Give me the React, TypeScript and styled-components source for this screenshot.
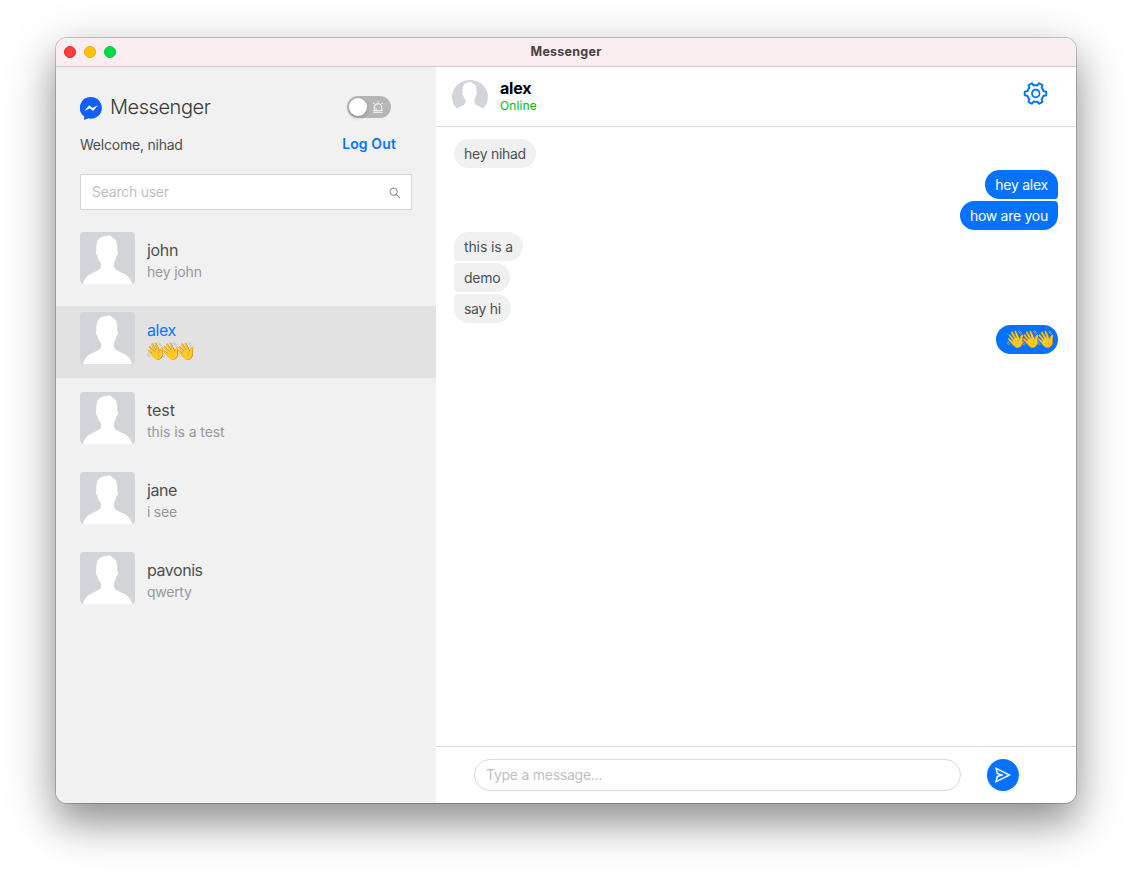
import React from "react";
import styled, { createGlobalStyle } from "styled-components";
import { AiOutlineAlert, AiOutlineSearch, AiOutlineSend, AiOutlineSetting } from "react-icons/ai";

const GlobalStyle = createGlobalStyle`
  *, *::before, *::after { box-sizing: border-box; }
  body {
    margin: 0;
    background: #fff;
    font-family: Inter, "Liberation Sans", sans-serif;
    font-size: 14px;
    color: #4a5052;
    overflow: hidden;
  }
`;

const Desktop = styled.div`
  height: 877px;
  padding: 38px 56px 74px;
`;

const Window = styled.div`
  height: 765px;
  display: flex;
  flex-direction: column;
  border-radius: 11px;
  overflow: hidden;
  background: #fff;
  box-shadow: 0 0 0 1px rgba(0, 0, 0, 0.2), 0 19px 34px rgba(0, 0, 0, 0.28), 0 16px 56px rgba(0, 0, 0, 0.24);
`;

const TitleBar = styled.div`
  height: 29px;
  flex: none;
  display: grid;
  grid-template-columns: 1fr auto 1fr;
  align-items: center;
  background: #f9edef;
  border-bottom: 1px solid #cfcbcc;
`;

const Lights = styled.div`
  display: flex;
  gap: 8px;
  padding-left: 8px;
`;

const Light = styled.span<{ $fill: string; $edge: string }>`
  width: 12px;
  height: 12px;
  border-radius: 50%;
  background: ${(p) => p.$fill};
  border: 1px solid ${(p) => p.$edge};
`;

const WindowTitle = styled.div`
  font-size: 12.5px;
  font-weight: 700;
  line-height: 16px;
  color: #484244;
  letter-spacing: 0.25px;
  margin-top: -1px;
`;

const Body = styled.div`
  flex: 1;
  display: flex;
  min-height: 0;
`;

const Sidebar = styled.aside`
  width: 380px;
  flex: none;
  background: #f1f1f1;
`;

const BrandRow = styled.div`
  display: flex;
  align-items: center;
  justify-content: space-between;
  height: 30px;
  margin-top: 25px;
  padding: 0 45px 0 24px;
`;

const Brand = styled.div`
  display: flex;
  align-items: center;
  gap: 8px;
  svg { display: block; margin-top: 3px; }
`;

const BrandName = styled.h1`
  margin: 0;
  font-size: 20px;
  font-weight: 300;
  line-height: 30px;
  letter-spacing: -0.45px;
  color: #343a40;
`;

const Toggle = styled.div`
  width: 44px;
  height: 22px;
  border-radius: 11px;
  background: #b5b5b5;
  display: flex;
  align-items: center;
  justify-content: space-between;
  padding: 0 6px 0 2px;
  color: #fff;
`;

const Knob = styled.span`
  width: 18px;
  height: 18px;
  border-radius: 50%;
  background: #fff;
  box-shadow: 0 2px 4px rgba(0, 35, 11, 0.2);
`;

const WelcomeRow = styled.div`
  display: flex;
  justify-content: space-between;
  padding: 12px 40px 0 24px;
  height: 52px;
  line-height: 22px;
`;

const LogOut = styled.a`
  color: #0d72ff;
  font-weight: 600;
  letter-spacing: 0.12px;
  margin-top: -1px;
`;

const SearchBox = styled.div`
  margin: 0 24px;
  height: 36px;
  border: 1px solid #d5d5d5;
  background: #fff;
  display: flex;
  align-items: center;
  justify-content: space-between;
  padding: 0 9px 1px 11px;
  color: #bfbfbf;
  svg { color: #8c8c8c; margin-top: 3px; }
`;

const Contacts = styled.div`
  padding-top: 16px;
  display: flex;
  flex-direction: column;
  gap: 8px;
`;

const ContactRow = styled.div<{ $active?: boolean }>`
  height: 72px;
  padding: 6px 24px;
  display: flex;
  gap: 12px;
  background: ${(p) => (p.$active ? "#e2e2e2" : "transparent")};
`;

const Photo = styled.div`
  width: 55px;
  height: 52px;
  border-radius: 4px;
  overflow: hidden;
  svg { display: block; }
`;

const ContactName = styled.div<{ $active?: boolean }>`
  margin-top: 6px;
  font-size: 16px;
  line-height: 24px;
  color: ${(p) => (p.$active ? "#0d72ff" : "#4a5052")};
`;

const Preview = styled.div`
  font-size: 14px;
  line-height: 20px;
  height: 20px;
  color: #989898;
`;

const Spaced = styled.span<{ $ls: number }>`
  letter-spacing: ${(p) => p.$ls}px;
  white-space: nowrap;
`;

const Emoji = styled.span<{ $start?: number }>`
  display: block;
  width: 42px;
  margin-left: ${(p) => p.$start ?? 0}px;
  font-size: 17px;
  line-height: 18px;
  letter-spacing: -6.2px;
  white-space: nowrap;
`;

const Chat = styled.main`
  flex: 1;
  display: flex;
  flex-direction: column;
`;

const ChatHeader = styled.header`
  height: 60px;
  flex: none;
  display: flex;
  padding: 0 27px 0 16px;
  border-bottom: 1px solid #d9d9d9;
  svg.gear { color: #0572ff; margin: 13px 0 0 auto; transform: rotate(90deg); }
`;

const RoundPhoto = styled.div`
  width: 36px;
  height: 34px;
  margin: 13px 12px 0 0;
  border-radius: 50%;
  overflow: hidden;
  svg { display: block; }
`;

const PeerName = styled.div`
  margin-top: 11px;
  font-size: 16px;
  font-weight: 700;
  line-height: 20px;
  letter-spacing: -0.2px;
  color: #000;
`;

const PeerStatus = styled.div`
  font-size: 12px;
  line-height: 15px;
  letter-spacing: 0.12px;
  color: #00b428;
`;

const Messages = styled.div`
  flex: 1;
  padding: 12px 18px;
  display: flex;
  flex-direction: column;
  gap: 2px;
`;

const Bubble = styled.div<{ $mine?: boolean; $corners: string }>`
  align-self: ${(p) => (p.$mine ? "flex-end" : "flex-start")};
  height: 29px;
  line-height: 30px;
  padding: 0 10px;
  border-radius: ${(p) => p.$corners};
  background: ${(p) => (p.$mine ? "#0572ff" : "#f1f0f0")};
  color: ${(p) => (p.$mine ? "#fff" : "#4a5052")};
  ${Emoji} { width: 43px; line-height: 28px; }
`;

const Composer = styled.footer`
  height: 57px;
  flex: none;
  border-top: 1px solid #d9d9d9;
  display: flex;
  align-items: center;
  gap: 26px;
  padding: 0 57px 0 38px;
`;

const MessageField = styled.div`
  flex: 1;
  height: 32px;
  border: 1px solid #d9d9d9;
  border-radius: 16px;
  padding: 0 11px;
  line-height: 30px;
  color: #bfbfbf;
`;

const SendButton = styled.div`
  width: 32px;
  height: 32px;
  border-radius: 50%;
  background: #0572ff;
  color: #fff;
  display: flex;
  align-items: center;
  justify-content: center;
  box-shadow: 0 2px 0 rgba(0, 0, 0, 0.04);
  svg { stroke: #fff; stroke-width: 16px; }
`;

const Person = ({ w, h }: { w: number; h: number }) => (
  <svg width={w} height={h} viewBox="0 0 55 52" preserveAspectRatio="none">
    <path
      d="M0 0H55V52H52C50 43 42 41 37 38.500C34 37 33.500 35 34 31C35 29 36 26 36.500 23.500C38 23 38.500 19.500 37 18.500C38 11 36 7 32.500 6C31.500 4 29 3 27 4C19 4 16 9 16.500 18.500C15.500 19.500 16 23 17.500 23.500C18 26 19 29 21 31C21.500 34.500 21 37 18 38.500C13 41 5 43 3 52H0Z"
      fill="#d1d5da"
    />
    <path
      d="M3 52C5 43 13 41 18 38.500C21 37 21.500 34.500 21 31C19 29 18 26 17.500 23.500C16 23 15.500 19.500 16.500 18.500C16 9 19 4 27 4C29 3 31.500 4 32.500 6C36 7 38 11 37 18.500C38.500 19.500 38 23 36.500 23.500C36 26 35 29 34 31C33.500 35 34 37 37 38.500C42 41 50 43 52 52Z"
      fill="#fff"
    />
  </svg>
);

const MessengerLogo = () => (
  <svg width="22" height="23" viewBox="0 0 22 23">
    <path d="M11 0A11 10.800 0 1 1 8.300 21.300L4.200 23V19.400A11 10.800 0 0 1 11 0Z" fill="#145dff" />
    <path d="M4.300 14L9.200 8.300L12.300 11L18 8.300L13 13.900L9.900 11.200Z" fill="#fff" />
  </svg>
);

const contacts = [
  { name: "john", preview: "hey john", ns: -0.3, ps: -0.2 },
  { name: "alex", preview: "👋👋👋", ns: -0.45, ps: 0, active: true, emoji: true },
  { name: "test", preview: "this is a test", ns: -0.05, ps: -0.08 },
  { name: "jane", preview: "i see", ns: -0.45, ps: -0.25 },
  { name: "pavonis", preview: "qwerty", ns: -0.46, ps: -0.27 },
];

const messages = [
  { text: "hey nihad", corners: "15px", ls: -0.27 },
  { text: "hey alex", mine: true, corners: "15px 15px 4px 15px", ls: -0.25 },
  { text: "how are you", mine: true, corners: "15px 4px 15px 15px", ls: -0.27 },
  { text: "this is a", corners: "15px 15px 15px 4px", ls: -0.12 },
  { text: "demo", corners: "4px 15px 15px 4px", ls: -0.25 },
  { text: "say hi", corners: "4px 15px 15px 15px", ls: -0.3 },
  { text: "👋👋👋", mine: true, corners: "15px", ls: 0, emoji: true },
];

export default function App() {
  return (
    <>
      <GlobalStyle />
      <Desktop>
        <Window>
          <TitleBar>
            <Lights>
              <Light $fill="#ff403e" $edge="#ee2027" />
              <Light $fill="#ffc300" $edge="#e8ab00" />
              <Light $fill="#00db47" $edge="#00c93d" />
            </Lights>
            <WindowTitle>Messenger</WindowTitle>
          </TitleBar>
          <Body>
            <Sidebar>
              <BrandRow>
                <Brand>
                  <MessengerLogo />
                  <BrandName>Messenger</BrandName>
                </Brand>
                <Toggle>
                  <Knob />
                  <AiOutlineAlert size={14} />
                </Toggle>
              </BrandRow>
              <WelcomeRow>
                <Spaced $ls={-0.22}>Welcome, nihad</Spaced>
                <LogOut>Log Out</LogOut>
              </WelcomeRow>
              <SearchBox>
                <Spaced $ls={-0.25}>Search user</Spaced>
                <AiOutlineSearch size={14} />
              </SearchBox>
              <Contacts>
                {contacts.map((c) => (
                  <ContactRow key={c.name} $active={c.active}>
                    <Photo>
                      <Person w={55} h={52} />
                    </Photo>
                    <div>
                      <ContactName $active={c.active}>
                        <Spaced $ls={c.ns}>{c.name}</Spaced>
                      </ContactName>
                      <Preview>
                        {c.emoji ? <Emoji $start={-2}>{c.preview}</Emoji> : <Spaced $ls={c.ps}>{c.preview}</Spaced>}
                      </Preview>
                    </div>
                  </ContactRow>
                ))}
              </Contacts>
            </Sidebar>
            <Chat>
              <ChatHeader>
                <RoundPhoto>
                  <Person w={36} h={34} />
                </RoundPhoto>
                <div>
                  <PeerName>alex</PeerName>
                  <PeerStatus>Online</PeerStatus>
                </div>
                <AiOutlineSetting className="gear" size={27} />
              </ChatHeader>
              <Messages>
                {messages.map((m) => (
                  <Bubble key={m.text} $mine={m.mine} $corners={m.corners}>
                    {m.emoji ? <Emoji $start={-1}>{m.text}</Emoji> : <Spaced $ls={m.ls}>{m.text}</Spaced>}
                  </Bubble>
                ))}
              </Messages>
              <Composer>
                <MessageField>
                  <Spaced $ls={-0.25}>Type a message...</Spaced>
                </MessageField>
                <SendButton>
                  <AiOutlineSend size={18} />
                </SendButton>
              </Composer>
            </Chat>
          </Body>
        </Window>
      </Desktop>
    </>
  );
}
